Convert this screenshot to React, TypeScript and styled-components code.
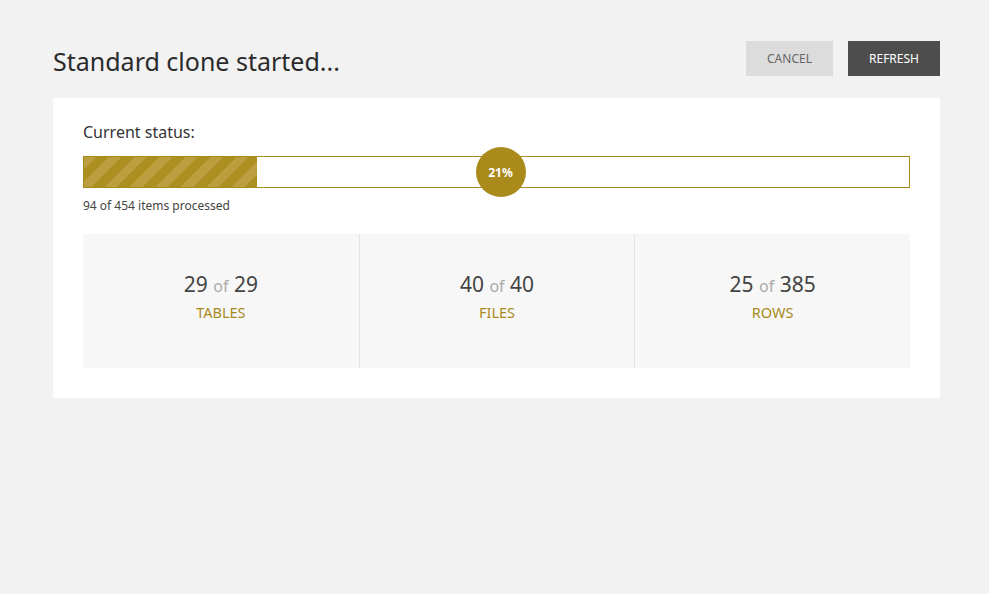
import styled, { createGlobalStyle } from 'styled-components';

const GlobalStyle = createGlobalStyle`
  html, body {
    margin: 0;
    padding: 0;
    background: #f2f2f2;
    font-family: 'Noto Sans', 'Open Sans', sans-serif;
    color: #333;
  }
`;

const Page = styled.div`
  padding: 41px 49px 0 53px;
`;

const Header = styled.div`
  display: flex;
  align-items: center;
  justify-content: space-between;
  height: 35px;
  margin-bottom: 22px;
`;

const Title = styled.h1`
  margin: 0;
  font-size: 25px;
  font-weight: 400;
  color: #2b2b2b;
  padding-top: 4px;
`;

const Actions = styled.div`
  display: flex;
  gap: 15px;
`;

const Button = styled.button<{ $primary?: boolean }>`
  height: 35px;
  padding: 0;
  width: ${(p) => (p.$primary ? '92px' : '87px')};
  border: none;
  font-family: inherit;
  font-size: 12px;
  text-transform: uppercase;
  cursor: pointer;
  background: ${(p) => (p.$primary ? '#4d4d4d' : '#dcdcdc')};
  color: ${(p) => (p.$primary ? '#fff' : '#666')};
`;

const Card = styled.div`
  background: #fff;
  padding: 23px 30px 30px;
`;

const Label = styled.div`
  font-size: 16px;
  color: #333;
  margin-bottom: 13px;
`;

const Bar = styled.div`
  position: relative;
  height: 30px;
  border: 1px solid #a88b1d;
  background: #fff;
`;

const Fill = styled.div`
  height: 100%;
  background: repeating-linear-gradient(
    -45deg,
    #ad8e20 0px,
    #ad8e20 9px,
    #bb9e3e 9px,
    #bb9e3e 18px
  );
`;

const Bubble = styled.div`
  position: absolute;
  left: 50%;
  top: 50%;
  width: 50px;
  height: 50px;
  margin-left: -21px;
  margin-top: -25px;
  border-radius: 50%;
  background: #a98a1b;
  color: #fff;
  font-size: 12px;
  font-weight: 700;
  display: flex;
  align-items: center;
  justify-content: center;
`;

const Processed = styled.div`
  font-size: 12px;
  color: #444;
  margin-top: 9px;
  margin-bottom: 20px;
`;

const Stats = styled.div`
  display: grid;
  grid-template-columns: repeat(3, 1fr);
  background: #f7f7f7;
  height: 134px;
`;

const Stat = styled.div`
  display: flex;
  flex-direction: column;
  align-items: center;
  padding-top: 36px;
  & + & {
    border-left: 1px solid #e3e3e3;
  }
`;

const Count = styled.div`
  font-size: 21px;
  color: #444;
  line-height: 28px;
`;

const Of = styled.span`
  font-size: 16px;
  color: #aaa;
`;

const StatName = styled.div`
  font-size: 14.5px;
  color: #a88b1d;
  text-transform: uppercase;
  margin-top: 2px;
`;

const stats = [
  { done: 29, total: 29, name: 'Tables' },
  { done: 40, total: 40, name: 'Files' },
  { done: 25, total: 385, name: 'Rows' },
];

export default function App() {
  const percent = 21;
  return (
    <Page>
      <GlobalStyle />
      <Header>
        <Title>Standard clone started...</Title>
        <Actions>
          <Button>Cancel</Button>
          <Button $primary>Refresh</Button>
        </Actions>
      </Header>
      <Card>
        <Label>Current status:</Label>
        <Bar>
          <Fill style={{ width: `${percent}%` }} />
          <Bubble>{percent}%</Bubble>
        </Bar>
        <Processed>94 of 454 items processed</Processed>
        <Stats>
          {stats.map((s) => (
            <Stat key={s.name}>
              <Count>
                {s.done} <Of>of</Of> {s.total}
              </Count>
              <StatName>{s.name}</StatName>
            </Stat>
          ))}
        </Stats>
      </Card>
    </Page>
  );
}
